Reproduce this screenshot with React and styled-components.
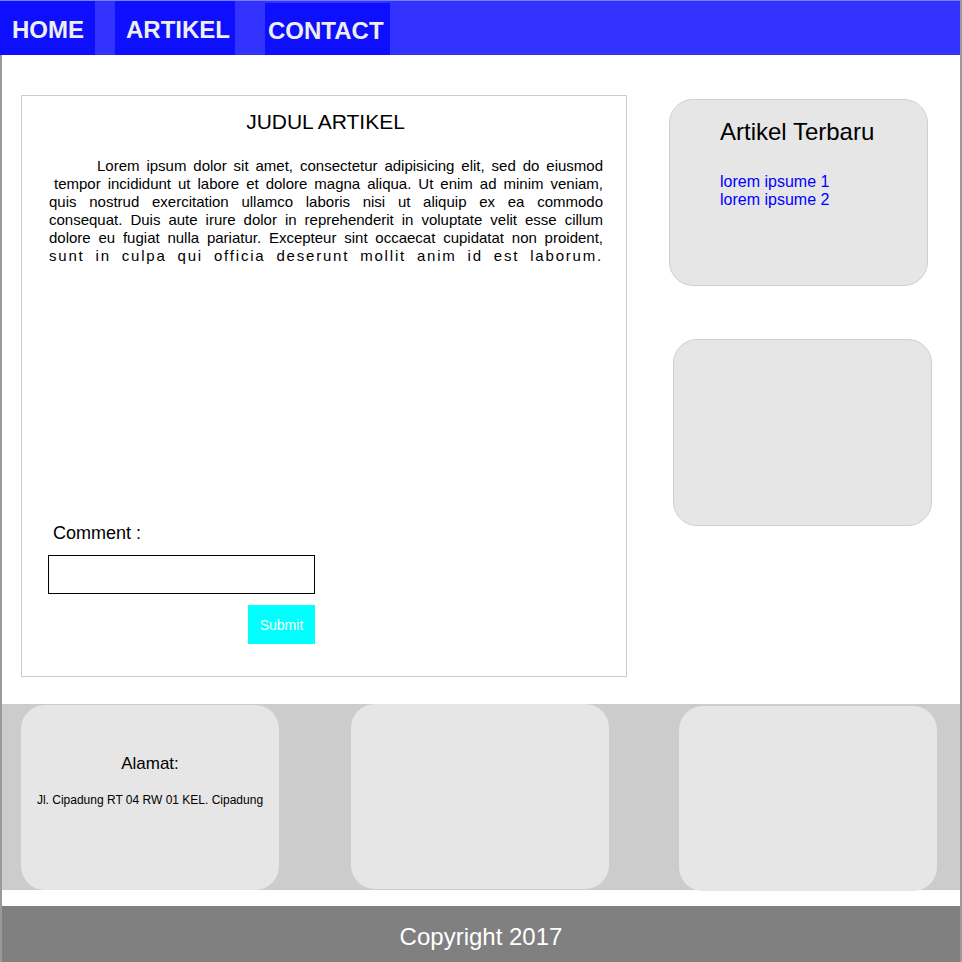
import { createGlobalStyle, styled } from "styled-components";

const GlobalStyle = createGlobalStyle`
    html, body {
        margin: 0;
        padding: 0;
        background: #fff;
    }
    body {
        font-family: "Liberation Sans", Arial, sans-serif;
        color: #000;
    }
`

const Page = styled.div`
    width: 962px;
    box-sizing: border-box;
    border-right: 2px solid #9a9a9a;
    display: flex;
    flex-direction: column;
`
const NavBar = styled.nav`
    height: 55px;
    background-color: #3333ff;
    border-top: 1px solid #7a7aff;
    box-sizing: border-box;
    display: flex;
    align-items: flex-start;
`
const NavItem = styled.a`
    width: ${props => props.$width}px;
    margin-left: ${props => props.$offset || 0}px;
    margin-top: ${props => props.$top || 0}px;
    height: ${props => 54 - (props.$top || 0)}px;
    background-color: #0f0fff;
    color: #eeeeee;
    font-size: 24px;
    font-weight: bold;
    text-decoration: none;
    box-sizing: border-box;
    padding-left: ${props => props.$pad}px;
    padding-top: 4px;
    display: flex;
    align-items: center;
`
const Body = styled.div`
    border-left: 2px solid #9a9a9a;
    display: flex;
    flex-direction: column;
`
const Main = styled.main`
    display: flex;
    align-items: flex-start;
    gap: 42px;
    padding: 40px 0 27px 19px;
`
const ArticleBox = styled.article`
    width: 606px;
    height: 582px;
    box-sizing: border-box;
    border: 1px solid #cccccc;
    padding: 14px 23px 32px 26px;
    display: flex;
    flex-direction: column;
`
const ArticleTitle = styled.h2`
    margin: 0;
    font-size: 21px;
    line-height: 24px;
    font-weight: normal;
    text-align: center;
`
const ArticleText = styled.p`
    margin: 23px 0 0 1px;
    font-size: 15px;
    line-height: 18px;
`
const TextLine = styled.span`
    display: block;
    text-align: justify;
    text-align-last: justify;
    padding-left: ${props => props.$indent || 0}px;
    letter-spacing: ${props => props.$spread ? "1.8px" : "normal"};
`
const CommentForm = styled.form`
    margin-top: auto;
    width: 267px;
    display: flex;
    flex-direction: column;
    align-items: flex-end;
`
const CommentLabel = styled.label`
    align-self: flex-start;
    margin-left: 5px;
    font-size: 18px;
    line-height: 22px;
`
const CommentInput = styled.input`
    margin-top: 11px;
    width: 267px;
    height: 39px;
    box-sizing: border-box;
    border: 1px solid #000;
    outline: none;
    padding: 0 6px;
    font-family: inherit;
`
const SubmitButton = styled.button`
    margin-top: 11px;
    width: 67px;
    height: 39px;
    border: none;
    background-color: #00ffff;
    color: #ffffff;
    font-family: inherit;
    font-size: 14px;
    padding: 0;
`
const SideColumn = styled.aside`
    display: flex;
    flex-direction: column;
    gap: 53px;
    padding-top: 4px;
`
const SideCard = styled.div`
    width: 259px;
    height: 187px;
    box-sizing: border-box;
    margin-left: ${props => props.$shift || 0}px;
    background-color: #e6e6e6;
    border: 1px solid #cfcfcf;
    border-radius: 24px;
    padding: 18px 0 0 50px;
`
const SideTitle = styled.h3`
    margin: 0;
    font-size: 24px;
    line-height: 28px;
    font-weight: normal;
`
const LinkList = styled.ul`
    list-style: none;
    margin: 27px 0 0;
    padding: 0;
`
const LinkItem = styled.li`
    font-size: 16px;
    line-height: 18px;
    a {
        color: #0000ff;
        text-decoration: none;
    }
`
const InfoBand = styled.section`
    height: 186px;
    background-color: #cccccc;
    display: flex;
    align-items: flex-start;
    padding-left: 19px;
    gap: 72px;
`
const InfoCard = styled.div`
    width: 258px;
    height: 185px;
    margin-top: ${props => props.$top || 0}px;
    margin-left: ${props => props.$shift || 0}px;
    background-color: #e6e6e6;
    border-radius: 24px;
    padding-top: 49px;
    box-sizing: border-box;
    text-align: center;
`
const InfoTitle = styled.div`
    font-size: 17px;
    line-height: 20px;
`
const InfoText = styled.div`
    margin-top: 19px;
    font-size: 12px;
    line-height: 14px;
`
const Copyright = styled.footer`
    margin-top: 16px;
    height: 56px;
    box-sizing: border-box;
    padding-top: 5px;
    background-color: #808080;
    color: #ffffff;
    font-size: 24px;
    display: flex;
    align-items: center;
    justify-content: center;
`

function App() {
    const navItems = [
        { label: "HOME", width: 95, offset: 0, pad: 12, top: 0 },
        { label: "ARTIKEL", width: 120, offset: 20, pad: 11, top: 0 },
        { label: "CONTACT", width: 125, offset: 30, pad: 3, top: 2 }
    ]

    const articleLines = [
        { text: "Lorem ipsum dolor sit amet, consectetur adipisicing elit, sed do eiusmod", indent: 48 },
        { text: "tempor incididunt ut labore et dolore magna aliqua. Ut enim ad minim veniam,", indent: 5 },
        { text: "quis nostrud exercitation ullamco laboris nisi ut aliquip ex ea commodo" },
        { text: "consequat. Duis aute irure dolor in reprehenderit in voluptate velit esse cillum" },
        { text: "dolore eu fugiat nulla pariatur. Excepteur sint occaecat cupidatat non proident," },
        { text: "sunt in culpa qui officia deserunt mollit anim id est laborum.", spread: true }
    ]

    const latest = ["lorem ipsume 1", "lorem ipsume 2"]

    return <>
        <GlobalStyle />
        <Page>
            <NavBar>
                {
                    navItems.map(item => <NavItem
                        key={item.label}
                        href="#"
                        $width={item.width}
                        $offset={item.offset}
                        $pad={item.pad}
                        $top={item.top}
                    >{item.label}</NavItem>)
                }
            </NavBar>
            <Body>
                <Main>
                    <ArticleBox>
                        <ArticleTitle>JUDUL ARTIKEL</ArticleTitle>
                        <ArticleText>
                            {
                                articleLines.map(line => <TextLine
                                    key={line.text}
                                    $indent={line.indent}
                                    $spread={line.spread}
                                >{line.text}</TextLine>)
                            }
                        </ArticleText>
                        <CommentForm onSubmit={e => e.preventDefault()}>
                            <CommentLabel htmlFor="comment">Comment :</CommentLabel>
                            <CommentInput id="comment" type="text" />
                            <SubmitButton type="submit">Submit</SubmitButton>
                        </CommentForm>
                    </ArticleBox>
                    <SideColumn>
                        <SideCard>
                            <SideTitle>Artikel Terbaru</SideTitle>
                            <LinkList>
                                {latest.map(item => <LinkItem key={item}><a href="#">{item}</a></LinkItem>)}
                            </LinkList>
                        </SideCard>
                        <SideCard $shift={4} />
                    </SideColumn>
                </Main>
                <InfoBand>
                    <InfoCard $top={1}>
                        <InfoTitle>Alamat:</InfoTitle>
                        <InfoText>Jl. Cipadung RT 04 RW 01 KEL. Cipadung</InfoText>
                    </InfoCard>
                    <InfoCard />
                    <InfoCard $top={2} $shift={-2} />
                </InfoBand>
                <Copyright>Copyright 2017</Copyright>
            </Body>
        </Page>
    </>
}

export default App;
